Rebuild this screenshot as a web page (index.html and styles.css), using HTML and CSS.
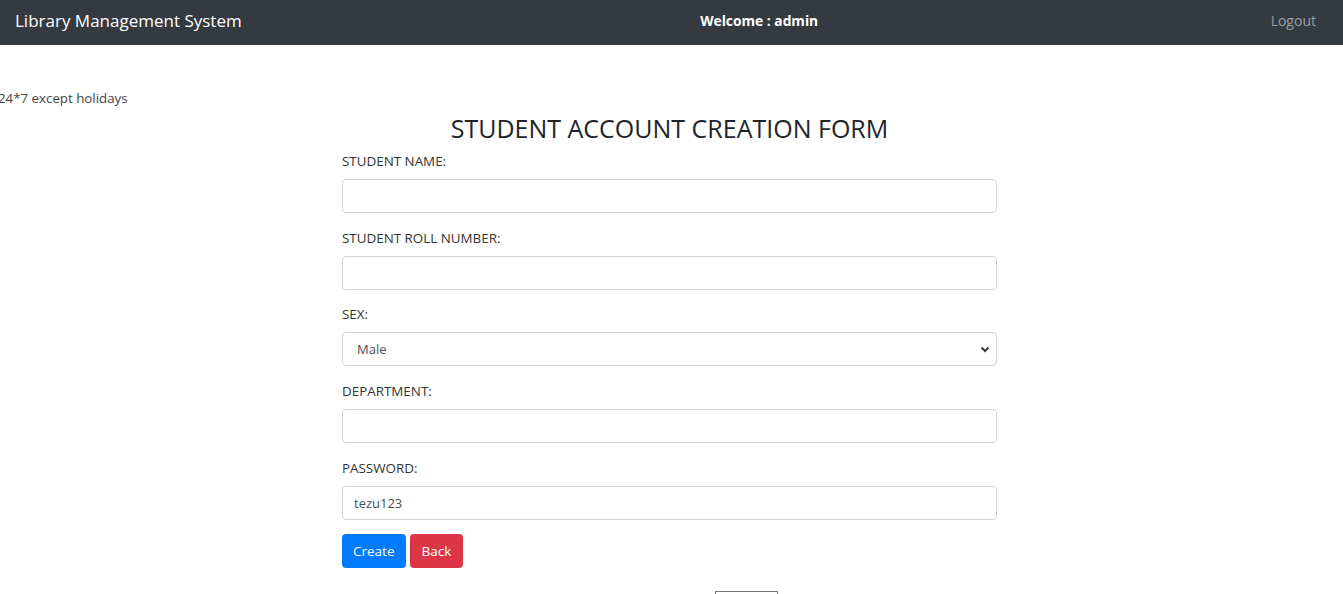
FILE: index.html
```html
<!DOCTYPE html>
<html>
<head>
<meta charset="utf-8">
<link rel="stylesheet" href="styles.css">
</head>
<body>
<nav class="navbar">
  <span class="brand">Library Management System</span>
  <span class="welcome">Welcome : admin</span>
  <a class="logout" href="#">Logout</a>
</nav>
<div class="notice">24*7 except holidays</div>
<main class="main">
  <form class="form">
    <h2 class="title">STUDENT ACCOUNT CREATION FORM</h2>
    <div class="group">
      <label class="label">STUDENT NAME:</label>
      <input class="control" type="text">
    </div>
    <div class="group group-tight">
      <label class="label">STUDENT ROLL NUMBER:</label>
      <input class="control" type="text">
    </div>
    <div class="group">
      <label class="label">SEX:</label>
      <div class="select">
        <span>Male</span>
        <svg class="chev" width="10" height="8" viewBox="0 0 10 8"><path d="M1.5 2.5 L5 6 L8.5 2.5" fill="none" stroke="#343a40" stroke-width="2"/></svg>
      </div>
    </div>
    <div class="group">
      <label class="label">DEPARTMENT:</label>
      <input class="control" type="text">
    </div>
    <div class="group group-tight">
      <label class="label">PASSWORD:</label>
      <input class="control" type="text" value="tezu123">
    </div>
    <div class="buttons">
      <button class="btn btn-blue" type="button">Create</button>
      <button class="btn btn-red" type="button">Back</button>
    </div>
  </form>
  <div class="footer-box"></div>
</main>
</body>
</html>
```
FILE: styles.css
```css
html, body {
  margin: 0;
  padding: 0;
  background: #fff;
  font-family: "Open Sans", "Noto Sans", sans-serif;
  color: #212529;
  overflow: hidden;
  height: 594px;
}
.navbar {
  height: 45px;
  background: #343a40;
  display: flex;
  align-items: center;
  justify-content: space-between;
  padding: 0 27px 4px 15px;
  box-sizing: border-box;
}
.brand {
  color: #fff;
  font-size: 17px;
}
.welcome {
  color: #fff;
  font-weight: 700;
  font-size: 13.8px;
  margin-left: 6px;
}
.logout {
  color: rgba(255,255,255,.5);
  text-decoration: none;
  font-size: 14px;
}
.notice {
  margin-top: 43px;
  margin-left: -2px;
  font-size: 13.3px;
  line-height: 20px;
  color: #444;
}
.main {
  display: flex;
  flex-direction: column;
  align-items: center;
  padding-right: 4px;
}
.form {
  width: 655px;
}
.title {
  margin: 5px 0 8px;
  text-align: center;
  font-weight: 400;
  font-size: 25px;
  line-height: 30px;
  color: #212529;
}
.group {
  margin-bottom: 15px;
}
.group-tight {
  margin-bottom: 14px;
}
.label {
  display: block;
  font-size: 13.4px;
  line-height: 20px;
  color: #333;
  margin-bottom: 8px;
}
.control, .select {
  display: block;
  box-sizing: border-box;
  width: 100%;
  height: 34px;
  border: 1px solid #ced4da;
  border-radius: 4px;
  padding: 0 11px;
  font-family: inherit;
  font-size: 13px;
  color: #495057;
  background: #fff;
  outline: none;
}
.select {
  display: flex;
  align-items: center;
  justify-content: space-between;
  padding: 0 6px 0 14px;
}
.buttons {
  display: flex;
  gap: 4px;
}
.btn {
  height: 34px;
  border: none;
  border-radius: 4px;
  color: #fff;
  font-family: inherit;
  font-size: 13.5px;
  padding: 0 11px;
}
.btn-red { padding: 0 12px; }
.btn-blue { background: #007bff; }
.btn-red { background: #dc3545; }
.footer-box {
  margin-top: 23px;
  margin-left: 154px;
  width: 61px;
  height: 2px;
  border: 1px solid #767676;
  border-bottom: none;
}
```
